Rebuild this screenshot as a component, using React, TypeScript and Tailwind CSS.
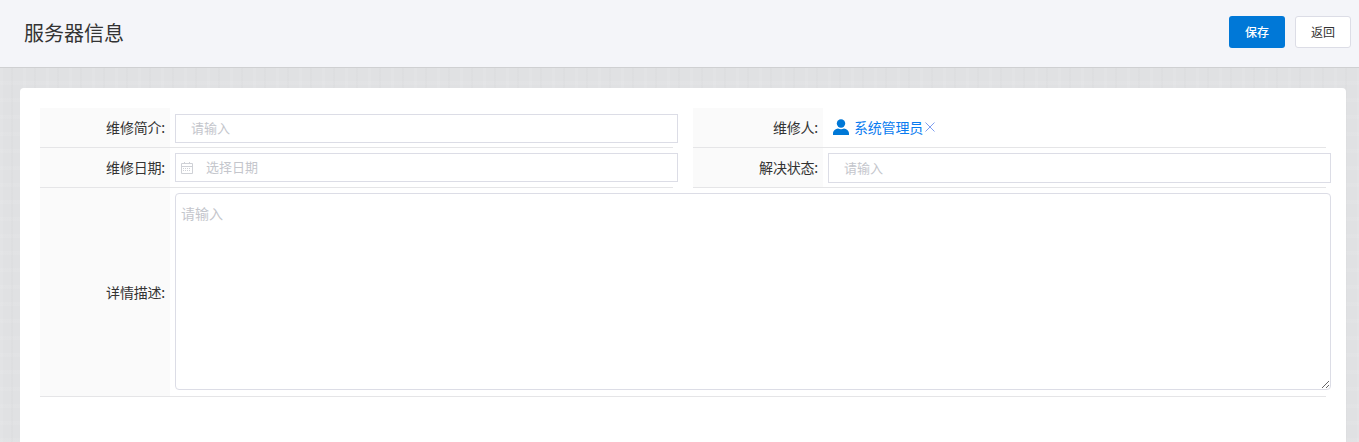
import React from 'react';

const FONT = "font-['Microsoft_YaHei','Noto_Sans_CJK_SC','Noto_Sans',sans-serif]";

function Label({ text, tall }: { text: string; tall?: boolean }) {
  return (
    <div className={`w-[130px] shrink-0 bg-[#fafafa] flex items-center justify-end pr-[5px] text-[14px] tracking-[-0.2px] text-[#333333] ${tall ? 'pt-[1px]' : 'pb-[1px]'}`}>
      {text}
    </div>
  );
}

function CalendarIcon() {
  return (
    <svg width="12" height="12" viewBox="0 0 12 12" className="absolute left-[6px] top-[9px] text-[#cfd1d6]" fill="none" stroke="currentColor">
      <path d="M.5 1.5h11v10H.5z" />
      <path d="M.5 4.5h11M3.5 0v2M8.5 0v2" />
      <path d="M2 6.5h8M2 8.5h8" strokeDasharray="1 1" />
    </svg>
  );
}

function UserIcon() {
  return (
    <svg width="16" height="16" viewBox="0 0 16 16" className="mr-[5px]" fill="#0078d7">
      <circle cx="8" cy="4.5" r="4.2" />
      <path d="M0 16v-1.6C0 11.6 2.6 10 5 9.6c1.9.7 4.1.7 6 0 2.400.4 5 2 5 4.800V16z" />
    </svg>
  );
}

function CloseIcon() {
  return (
    <svg width="10" height="10" viewBox="0 0 10 10" className="ml-[2px]" fill="none" stroke="#7f9ff0" strokeWidth="1">
      <path d="M.5.5l9 9M9.500.5l-9 9" />
    </svg>
  );
}

export default function App() {
  return (
    <div className={`${FONT} h-[442px] overflow-hidden flex flex-col bg-[#e0e1e3] bg-[repeating-linear-gradient(90deg,rgba(255,255,255,0.07)_0px,rgba(255,255,255,0.07)_3px,transparent_3px,transparent_11px,rgba(0,0,0,0.012)_11px,rgba(0,0,0,0.012)_13px,transparent_13px,transparent_23px),repeating-linear-gradient(0deg,rgba(255,255,255,0.06)_0px,rgba(255,255,255,0.06)_4px,transparent_4px,transparent_17px)]`}>
      {/* Header */}
      <header className="h-[68px] shrink-0 bg-[#f4f5f9] border-b border-[#cfd0d2] flex items-center justify-between pl-[24px] pr-[8px]">
        <h1 className="text-[20px] text-[#333333] font-normal -mt-[2px]">服务器信息</h1>
        <div className="flex gap-[10px] -mt-[3px]">
          <button className="w-[56px] h-[32px] rounded-[3px] bg-[#0078d7] text-white text-[12px] font-medium">保存</button>
          <button className="w-[56px] h-[32px] rounded-[3px] bg-white border border-[#dcdde6] text-[#333333] text-[12px]">返回</button>
        </div>
      </header>

      {/* Card */}
      <main className="flex-1 mt-[20px] ml-[20px] mr-[13px] bg-white rounded-t-[4px] pt-[20px] px-[20px]">
        <div className="grid grid-cols-[633px_633px] gap-x-[20px] -mr-[5px]">
          {/* Left column */}
          <div>
            <div className="flex h-[40px] border-b border-[#e5e5e7]">
              <Label text="维修简介:" />
              <div className="flex-1 pl-[5px] pt-[6px] -mr-[5px]">
                <input
                  placeholder="请输入"
                  className="w-full h-[29px] border border-[#dcdde6] pl-[15px] pb-[2px] text-[13px] outline-none placeholder:text-[#c4c6cc]"
                />
              </div>
            </div>
            <div className="flex h-[40px] border-b border-[#e5e5e7]">
              <Label text="维修日期:" />
              <div className="flex-1 pl-[5px] pt-[5px] -mr-[5px]">
                <div className="relative">
                  <CalendarIcon />
                  <input
                    placeholder="选择日期"
                    className="w-full h-[29px] border border-[#dcdde6] pl-[30px] pb-[2px] text-[13px] outline-none placeholder:text-[#c4c6cc]"
                  />
                </div>
              </div>
            </div>
          </div>

          {/* Right column */}
          <div>
            <div className="flex h-[40px] border-b border-[#e5e5e7]">
              <Label text="维修人:" />
              <div className="flex-1 pl-[10px] pb-[1px] flex items-center text-[14px] tracking-[-0.2px] text-[#0a7cf0]">
                <UserIcon />
                <span>系统管理员</span>
                <CloseIcon />
              </div>
            </div>
            <div className="flex h-[40px] border-b border-[#e5e5e7]">
              <Label text="解决状态:" />
              <div className="flex-1 pl-[5px] pt-[5px] -mr-[5px]">
                <input
                  placeholder="请输入"
                  className="w-full h-[30px] border border-[#dcdde6] pl-[15px] pb-[2px] text-[13px] outline-none placeholder:text-[#c4c6cc]"
                />
              </div>
            </div>
          </div>
        </div>

        <div className="flex h-[209px] w-[1286px] border-b border-[#e5e5e7]">
          <Label text="详情描述:" tall />
          <div className="flex-1 pl-[5px] pt-[5px] -mr-[5px]">
            <textarea
              placeholder="请输入"
              className="block w-full h-[197px] border border-[#dcdde6] rounded-[4px] px-[5px] pt-[9px] text-[14px] outline-none placeholder:text-[#c4c6cc]"
            />
          </div>
        </div>
      </main>
    </div>
  );
}
